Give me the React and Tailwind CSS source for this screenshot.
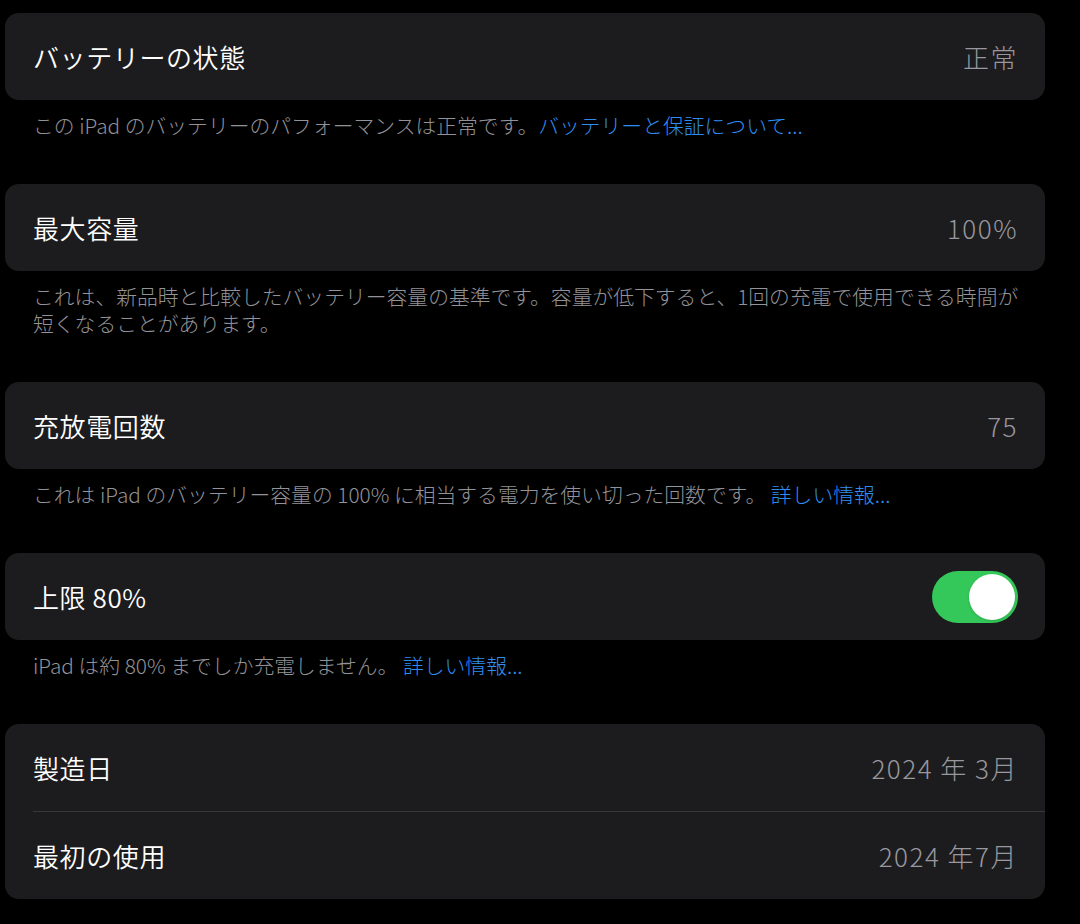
import React from 'react'

const font = { fontFamily: '"Noto Sans CJK JP", "Noto Sans", sans-serif' }

const Row = ({ label, value, children }) => (
  <div className="h-[87px] flex items-center justify-between pl-[28px] pr-[27px]">
    <span className="text-[26px] font-[350] text-white tracking-[0.6px]">{label}</span>
    {value && <span className="text-[26px] font-light text-[#98989e] tracking-[1.5px]">{value}</span>}
    {children}
  </div>
)

const Card = ({ children }) => (
  <div className="bg-[#1c1c1e] rounded-[14px] overflow-hidden">{children}</div>
)

const Note = ({ children }) => (
  <p className="pl-[28px] pr-[10px] pt-[12px] pb-[45px] text-[20.8px] leading-[27px] font-light text-[#929298]">
    {children}
  </p>
)

const Link = ({ children }) => <span className="text-[#2f8cf0]">{children}</span>

const Toggle = () => (
  <div className="w-[86px] h-[52px] rounded-full bg-[#34c759] flex items-center justify-end pr-[3px]">
    <div className="w-[46px] h-[46px] rounded-full bg-white shadow" />
  </div>
)

export default function App() {
  return (
    <div className="min-h-screen bg-black pt-[13px] pl-[5px]" style={font}>
      <div className="w-[1040px]">
        <Card>
          <Row label="バッテリーの状態" value="正常" />
        </Card>
        <Note>
          この iPad のバッテリーのパフォーマンスは正常です。<Link>バッテリーと保証について...</Link>
        </Note>

        <Card>
          <Row label="最大容量" value="100%" />
        </Card>
        <Note>
          これは、新品時と比較したバッテリー容量の基準です。容量が低下すると、1回の充電で使用できる時間が
          <br />
          短くなることがあります。
        </Note>

        <Card>
          <Row label="充放電回数" value="75" />
        </Card>
        <Note>
          これは iPad のバッテリー容量の 100% に相当する電力を使い切った回数です。 <Link>詳しい情報...</Link>
        </Note>

        <Card>
          <Row label="上限 80%">
            <Toggle />
          </Row>
        </Card>
        <Note>
          iPad は約 80% までしか充電しません。 <Link>詳しい情報...</Link>
        </Note>

        <Card>
          <Row label="製造日" value="2024 年 3月" />
          <div className="ml-[28px] h-px bg-[#38383a]" />
          <Row label="最初の使用" value="2024 年7月" />
        </Card>
      </div>
    </div>
  )
}
